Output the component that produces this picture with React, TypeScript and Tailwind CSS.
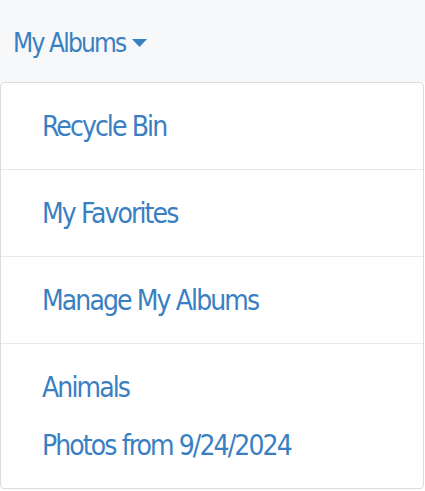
import React from 'react';

const ITEMS_GROUPS: string[][] = [
  ['Recycle Bin'],
  ['My Favorites'],
  ['Manage My Albums'],
  ['Animals', 'Photos from 9/24/2024'],
];

const fontStack = "font-['DejaVu_Sans_Condensed','Liberation_Sans_Narrow','Roboto',sans-serif]";

const App: React.FC = () => {
  return (
    <div className={`min-h-screen bg-white ${fontStack}`}>
      <div className="h-[82px] bg-[#f7f8fa] flex items-center pl-[13px] pt-[3px]">
        <button type="button" className="flex items-center gap-[7px] text-[26px] leading-none tracking-[-1.8px] text-[#3a7fc1]">
          <span>My Albums</span>
          <svg width="15" height="8" viewBox="0 0 15 8" className="mt-[1px]">
            <path d="M0 0 L15 0 L7.5 8 Z" fill="#3a7fc1" />
          </svg>
        </button>
      </div>
      <div className="w-[424px] border border-[#dcdcdc] rounded-[4px] bg-white">
        {ITEMS_GROUPS.map((group, i) => (
          <div
            key={i}
            className={`py-[14px] pl-[41px] ${i > 0 ? 'border-t border-[#e8e8e8]' : ''}`}
          >
            {group.map(item => (
              <a key={item} href="#" className="block h-[58px] leading-[59px] text-[28px] tracking-[-1.9px] text-[#3a7fc1]">
                {item}
              </a>
            ))}
          </div>
        ))}
      </div>
    </div>
  );
};

export default App;
